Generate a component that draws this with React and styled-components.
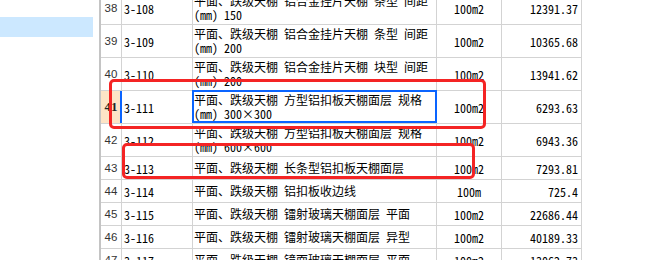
import React from "react";
import styled, { createGlobalStyle, css } from "styled-components";

const GlobalStyle = createGlobalStyle`
  html, body {
    margin: 0;
    padding: 0;
    background: #ffffff;
    overflow: hidden;
  }
`;

const LINE = "#d3d3d3";
const BLUE = "#0a64ff";
const RED = "#f42424";
const TEXT_FONT = `"Noto Sans Mono CJK SC", "Noto Sans CJK SC", "Liberation Mono", monospace`;

const Page = styled.div`
  position: relative;
  display: flex;
  align-items: flex-start;
  width: 670px;
  height: 260px;
  overflow: hidden;
  background: #fff;
`;

const Sidebar = styled.div`
  flex: none;
  width: 99px;
  padding-top: 17px;
`;

const SideItem = styled.div`
  width: 93px;
  height: 20px;
  background: #cce8ff;
`;

const Sheet = styled.div`
  flex: none;
  display: flex;
  flex-direction: column;
  margin-top: -8px;
  border-left: 2px solid #c4c4c4;
`;

const Row = styled.div`
  display: grid;
  grid-template-columns: 21px 71px 244px 65px 80px;
  height: ${(p) => (p.$tall ? 33 : 23)}px;
`;

const Cell = styled.div`
  position: relative;
  box-sizing: border-box;
  display: flex;
  align-items: center;
  border-right: 1px solid ${LINE};
  border-bottom: 1px solid ${LINE};
  font-family: ${TEXT_FONT};
  font-size: 12px;
  color: #000;
  white-space: nowrap;
`;

const NumCell = styled(Cell)`
  justify-content: center;
  font-family: "Liberation Sans", Arial, sans-serif;
  font-size: 11.5px;
  color: #333;
  ${(p) =>
    p.$active &&
    css`
      background: #fde4c6;
      font-family: "Liberation Serif", "Times New Roman", serif;
      font-weight: bold;
      font-size: 13px;
      color: #222;
    `}
`;

const CodeCell = styled(Cell)`
  padding-left: 2px;
  ${(p) =>
    p.$active &&
    css`
      &::before {
        content: "";
        position: absolute;
        left: -2px;
        top: 0;
        bottom: 0;
        width: 2px;
        background: ${BLUE};
      }
    `}
`;

const DescCell = styled(Cell)`
  flex-direction: column;
  align-items: flex-start;
  justify-content: center;
  padding-left: 1px;
  ${(p) =>
    p.$active &&
    css`
      &::after {
        content: "";
        position: absolute;
        left: -1px;
        top: -1px;
        right: -1px;
        bottom: 0;
        border: 2px solid ${BLUE};
        z-index: 2;
      }
    `}
`;

const DescLine = styled.span`
  display: block;
  line-height: 14px;
  height: 14px;
`;

const UnitCell = styled(Cell)`
  justify-content: center;
`;

const AmountCell = styled(Cell)`
  justify-content: flex-end;
  padding-right: 3px;
`;

const Mark = styled.div`
  position: absolute;
  box-sizing: border-box;
  border: 3px solid ${RED};
  border-radius: 5px;
  z-index: 5;
  pointer-events: none;
`;

const rows = [
  { n: 38, code: "3-108", desc: ["平面、跌级天棚 铝合金挂片天棚 条型 间距", "(mm) 150"], unit: "100m2", amount: "12391.37" },
  { n: 39, code: "3-109", desc: ["平面、跌级天棚 铝合金挂片天棚 条型 间距", "(mm) 200"], unit: "100m2", amount: "10365.68" },
  { n: 40, code: "3-110", desc: ["平面、跌级天棚 铝合金挂片天棚 块型 间距", "(mm) 200"], unit: "100m2", amount: "13941.62" },
  { n: 41, code: "3-111", desc: ["平面、跌级天棚 方型铝扣板天棚面层 规格", "(mm) 300×300"], unit: "100m2", amount: "6293.63", active: true },
  { n: 42, code: "3-112", desc: ["平面、跌级天棚 方型铝扣板天棚面层 规格", "(mm) 600×600"], unit: "100m2", amount: "6943.36" },
  { n: 43, code: "3-113", desc: ["平面、跌级天棚 长条型铝扣板天棚面层"], unit: "100m2", amount: "7293.81" },
  { n: 44, code: "3-114", desc: ["平面、跌级天棚 铝扣板收边线"], unit: "100m", amount: "725.4" },
  { n: 45, code: "3-115", desc: ["平面、跌级天棚 镭射玻璃天棚面层 平面"], unit: "100m2", amount: "22686.44" },
  { n: 46, code: "3-116", desc: ["平面、跌级天棚 镭射玻璃天棚面层 异型"], unit: "100m2", amount: "40189.33" },
  { n: 47, code: "3-117", desc: ["平面、跌级天棚 镜面玻璃天棚面层 平面"], unit: "100m2", amount: "13062.73" },
];

const marks = [
  { left: 109, top: 79, width: 377, height: 50 },
  { left: 122, top: 143, width: 353, height: 36 },
];

export default function App() {
  return (
    <>
      <GlobalStyle />
      <Page>
        <Sidebar>
          <SideItem />
        </Sidebar>
        <Sheet>
          {rows.map((r) => (
            <Row key={r.n} $tall={r.desc.length > 1}>
              <NumCell $active={r.active}>{r.n}</NumCell>
              <CodeCell $active={r.active}>{r.code}</CodeCell>
              <DescCell $active={r.active}>
                {r.desc.map((l, i) => (
                  <DescLine key={i}>{l}</DescLine>
                ))}
              </DescCell>
              <UnitCell>{r.unit}</UnitCell>
              <AmountCell>{r.amount}</AmountCell>
            </Row>
          ))}
        </Sheet>
        {marks.map((m, i) => (
          <Mark
            key={i}
            style={{ left: m.left, top: m.top, width: m.width, height: m.height }}
          />
        ))}
      </Page>
    </>
  );
}
